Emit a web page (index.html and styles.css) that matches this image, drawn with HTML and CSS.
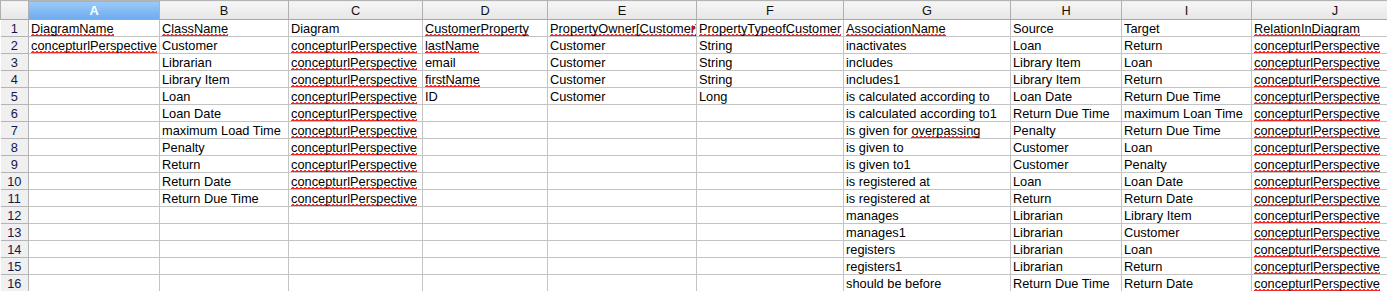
FILE: index.html
```html
<!DOCTYPE html>
<html>
<head>
  <meta charset="UTF-8">
  <title>Sheet1</title>
  <link rel="stylesheet" href="styles.css">
</head>
<body>
  <table class="sheet">
    <colgroup>
      <col class="c-rowhead">
      <col class="c-a"><col class="c-b"><col class="c-c"><col class="c-d"><col class="c-e">
      <col class="c-f"><col class="c-g"><col class="c-h"><col class="c-i"><col class="c-j">
    </colgroup>
    <thead>
      <tr>
        <th class="corner"></th>
        <th class="selected">A</th><th>B</th><th>C</th><th>D</th><th>E</th>
        <th>F</th><th>G</th><th>H</th><th>I</th><th>J</th>
      </tr>
    </thead>
    <tbody>
      <tr>
        <th>1</th>
        <td><span class="spell">DiagramName</span></td>
        <td><span class="spell">ClassName</span></td>
        <td>Diagram</td>
        <td><span class="spell">CustomerProperty</span></td>
        <td class="clipped"><span class="spell">PropertyOwner[Customer]</span></td>
        <td><span class="spell">PropertyTypeofCustomer</span></td>
        <td><span class="spell">AssociationName</span></td>
        <td>Source</td>
        <td>Target</td>
        <td><span class="spell">RelationInDiagram</span></td>
      </tr>
      <tr>
        <th>2</th>
        <td><span class="spell">concepturlPerspective</span></td>
        <td>Customer</td>
        <td><span class="spell">concepturlPerspective</span></td>
        <td><span class="spell">lastName</span></td>
        <td>Customer</td>
        <td>String</td>
        <td>inactivates</td>
        <td>Loan</td>
        <td>Return</td>
        <td><span class="spell">concepturlPerspective</span></td>
      </tr>
      <tr>
        <th>3</th>
        <td></td>
        <td>Librarian</td>
        <td><span class="spell">concepturlPerspective</span></td>
        <td>email</td>
        <td>Customer</td>
        <td>String</td>
        <td>includes</td>
        <td>Library Item</td>
        <td>Loan</td>
        <td><span class="spell">concepturlPerspective</span></td>
      </tr>
      <tr>
        <th>4</th>
        <td></td>
        <td>Library Item</td>
        <td><span class="spell">concepturlPerspective</span></td>
        <td><span class="spell">firstName</span></td>
        <td>Customer</td>
        <td>String</td>
        <td>includes1</td>
        <td>Library Item</td>
        <td>Return</td>
        <td><span class="spell">concepturlPerspective</span></td>
      </tr>
      <tr>
        <th>5</th>
        <td></td>
        <td>Loan</td>
        <td><span class="spell">concepturlPerspective</span></td>
        <td>ID</td>
        <td>Customer</td>
        <td>Long</td>
        <td>is calculated according to</td>
        <td>Loan Date</td>
        <td>Return Due Time</td>
        <td><span class="spell">concepturlPerspective</span></td>
      </tr>
      <tr>
        <th>6</th>
        <td></td>
        <td>Loan Date</td>
        <td><span class="spell">concepturlPerspective</span></td>
        <td></td><td></td><td></td>
        <td>is calculated according to1</td>
        <td>Return Due Time</td>
        <td>maximum Loan Time</td>
        <td><span class="spell">concepturlPerspective</span></td>
      </tr>
      <tr>
        <th>7</th>
        <td></td>
        <td>maximum Load Time</td>
        <td><span class="spell">concepturlPerspective</span></td>
        <td></td><td></td><td></td>
        <td>is given for <span class="spell">overpassing</span></td>
        <td>Penalty</td>
        <td>Return Due Time</td>
        <td><span class="spell">concepturlPerspective</span></td>
      </tr>
      <tr>
        <th>8</th>
        <td></td>
        <td>Penalty</td>
        <td><span class="spell">concepturlPerspective</span></td>
        <td></td><td></td><td></td>
        <td>is given to</td>
        <td>Customer</td>
        <td>Loan</td>
        <td><span class="spell">concepturlPerspective</span></td>
      </tr>
      <tr>
        <th>9</th>
        <td></td>
        <td>Return</td>
        <td><span class="spell">concepturlPerspective</span></td>
        <td></td><td></td><td></td>
        <td>is given to1</td>
        <td>Customer</td>
        <td>Penalty</td>
        <td><span class="spell">concepturlPerspective</span></td>
      </tr>
      <tr>
        <th>10</th>
        <td></td>
        <td>Return Date</td>
        <td><span class="spell">concepturlPerspective</span></td>
        <td></td><td></td><td></td>
        <td>is registered at</td>
        <td>Loan</td>
        <td>Loan Date</td>
        <td><span class="spell">concepturlPerspective</span></td>
      </tr>
      <tr>
        <th>11</th>
        <td></td>
        <td>Return Due Time</td>
        <td><span class="spell">concepturlPerspective</span></td>
        <td></td><td></td><td></td>
        <td>is registered at</td>
        <td>Return</td>
        <td>Return Date</td>
        <td><span class="spell">concepturlPerspective</span></td>
      </tr>
      <tr>
        <th>12</th>
        <td></td><td></td><td></td><td></td><td></td><td></td>
        <td>manages</td>
        <td>Librarian</td>
        <td>Library Item</td>
        <td><span class="spell">concepturlPerspective</span></td>
      </tr>
      <tr>
        <th>13</th>
        <td></td><td></td><td></td><td></td><td></td><td></td>
        <td>manages1</td>
        <td>Librarian</td>
        <td>Customer</td>
        <td><span class="spell">concepturlPerspective</span></td>
      </tr>
      <tr>
        <th>14</th>
        <td></td><td></td><td></td><td></td><td></td><td></td>
        <td>registers</td>
        <td>Librarian</td>
        <td>Loan</td>
        <td><span class="spell">concepturlPerspective</span></td>
      </tr>
      <tr>
        <th>15</th>
        <td></td><td></td><td></td><td></td><td></td><td></td>
        <td>registers1</td>
        <td>Librarian</td>
        <td>Return</td>
        <td><span class="spell">concepturlPerspective</span></td>
      </tr>
      <tr>
        <th>16</th>
        <td></td><td></td><td></td><td></td><td></td><td></td>
        <td>should be before</td>
        <td>Return Due Time</td>
        <td>Return Date</td>
        <td><span class="spell">concepturlPerspective</span></td>
      </tr>
    </tbody>
  </table>
</body>
</html>
```

FILE: styles.css
```css
body {
  margin: 0;
  background: #fff;
  overflow: hidden;
  font-family: 'Liberation Sans', Arial, sans-serif;
  font-size: 12.8px;
  color: #000;
}

.sheet {
  border-collapse: collapse;
  table-layout: fixed;
  width: 1418px;
}

.c-rowhead { width: 28px; }
.c-a { width: 131px; }
.c-b { width: 129px; }
.c-c { width: 134px; }
.c-d { width: 125px; }
.c-e { width: 149px; }
.c-f { width: 147px; }
.c-g { width: 167px; }
.c-h { width: 111px; }
.c-i { width: 130px; }
.c-j { width: 167px; }

/* column letters */
thead th {
  height: 18px;
  padding: 0;
  font-weight: normal;
  text-align: center;
  color: #111;
  background: linear-gradient(#f6f6f6, #e6e6e6);
  border-top: 1px solid #b4b4b4;
  border-bottom: 1px solid #a8a8a8;
  border-left: 1px solid #b0b0b0;
  border-right: 1px solid #b0b0b0;
}

thead th.selected {
  color: #fff;
  font-weight: bold;
  background: linear-gradient(#9ccbf8, #6daaf0);
}

/* row numbers */
tbody th {
  height: 16px;
  padding: 0;
  font-weight: normal;
  text-align: center;
  color: #16164a;
  background: #f0f0f0;
  border: 1px solid #b4b4b4;
  border-left: none;
}

td {
  height: 16px;
  padding: 0 2px 0 2px;
  vertical-align: bottom;
  white-space: nowrap;
  overflow: hidden;
  line-height: 15px;
  border: 1px solid #c4c4c4;
}

/* spell-check squiggle under unknown words */
.spell {
  background-image: url("data:image/svg+xml,%3Csvg xmlns='http://www.w3.org/2000/svg' width='4' height='3'%3E%3Cpath d='M0 2.4 L2 0.6 L4 2.4' fill='none' stroke='%23f00000' stroke-width='1.3'/%3E%3C/svg%3E");
  background-repeat: repeat-x;
  background-position: 0 100%;
  background-size: 4px 3px;
  padding-bottom: 1px;
}

/* text cut off at the cell edge gets a small red arrow */
td.clipped {
  position: relative;
}

td.clipped::after {
  content: "";
  position: absolute;
  right: 0;
  top: 5px;
  border-top: 3px solid transparent;
  border-bottom: 3px solid transparent;
  border-left: 4px solid #d01010;
}
```
